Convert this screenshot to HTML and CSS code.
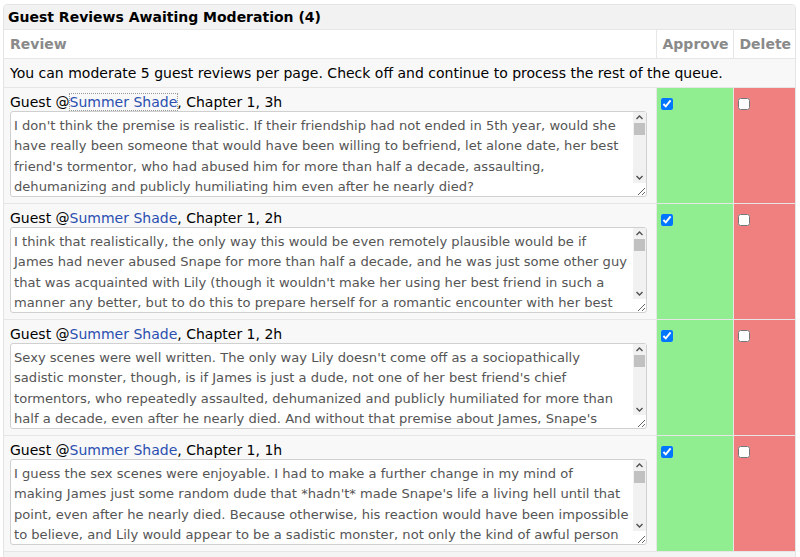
FILE: index.html
```html
<!DOCTYPE html>
<html>
<head>
<meta charset="utf-8">
<link rel="stylesheet" href="styles.css">
</head>
<body>
<div class="panel">
  <div class="title">Guest Reviews Awaiting Moderation (4)</div>
  <table class="grid">
    <colgroup><col class="c-review"><col class="c-approve"><col class="c-delete"></colgroup>
    <thead>
      <tr class="head">
        <th class="h-review">Review</th>
        <th class="h-act">Approve</th>
        <th class="h-act">Delete</th>
      </tr>
    </thead>
    <tbody>
      <tr class="info"><td colspan="3">You can moderate 5 guest reviews per page. Check off and continue to process the rest of the queue.</td></tr>
      <tr class="rev">
        <td class="body">
          <div class="meta">Guest @<a href="#" class="user focused">Summer Shade</a>, Chapter 1, 3h</div>
          <div class="tawrap">
            <textarea class="text" wrap="off">I don't think the premise is realistic. If their friendship had not ended in 5th year, would she
have really been someone that would have been willing to befriend, let alone date, her best
friend's tormentor, who had abused him for more than half a decade, assaulting,
dehumanizing and publicly humiliating him even after he nearly died?
It just doesn't fit with the person she was supposed to be, the girl who
stood up for him for years, and it makes it very hard to believe anything
that happens afterwards in this story.</textarea>
            <div class="sb" aria-hidden="true">
              <div class="sb-btn"><svg width="13" height="11" viewBox="0 0 13 11"><path d="M3.5 7 L6.5 4 L9.5 7" fill="none" stroke="#505050" stroke-width="1.4"/></svg></div>
              <div class="sb-thumb"></div>
              <div class="sb-track"></div>
              <div class="sb-btn"><svg width="13" height="11" viewBox="0 0 13 11"><path d="M3.5 4 L6.5 7 L9.5 4" fill="none" stroke="#505050" stroke-width="1.4"/></svg></div>
            </div>
          </div>
        </td>
        <td class="ok"><input type="checkbox" checked></td>
        <td class="del"><input type="checkbox"></td>
      </tr>
      <tr class="rev">
        <td class="body">
          <div class="meta">Guest @<a href="#" class="user">Summer Shade</a>, Chapter 1, 2h</div>
          <div class="tawrap">
            <textarea class="text" wrap="off">I think that realistically, the only way this would be even remotely plausible would be if
James had never abused Snape for more than half a decade, and he was just some other guy
that was acquainted with Lily (though it wouldn't make her using her best friend in such a
manner any better, but to do this to prepare herself for a romantic encounter with her best
friend's tormentor is something else entirely).</textarea>
            <div class="sb" aria-hidden="true">
              <div class="sb-btn"><svg width="13" height="11" viewBox="0 0 13 11"><path d="M3.5 7 L6.5 4 L9.5 7" fill="none" stroke="#505050" stroke-width="1.4"/></svg></div>
              <div class="sb-thumb"></div>
              <div class="sb-track"></div>
              <div class="sb-btn"><svg width="13" height="11" viewBox="0 0 13 11"><path d="M3.5 4 L6.5 7 L9.5 4" fill="none" stroke="#505050" stroke-width="1.4"/></svg></div>
            </div>
          </div>
        </td>
        <td class="ok"><input type="checkbox" checked></td>
        <td class="del"><input type="checkbox"></td>
      </tr>
      <tr class="rev">
        <td class="body">
          <div class="meta">Guest @<a href="#" class="user">Summer Shade</a>, Chapter 1, 2h</div>
          <div class="tawrap">
            <textarea class="text" wrap="off">Sexy scenes were well written. The only way Lily doesn't come off as a sociopathically
sadistic monster, though, is if James is just a dude, not one of her best friend's chief
tormentors, who repeatedly assaulted, dehumanized and publicly humiliated for more than
half a decade, even after he nearly died. And without that premise about James, Snape's
reaction would make a lot less sense.</textarea>
            <div class="sb" aria-hidden="true">
              <div class="sb-btn"><svg width="13" height="11" viewBox="0 0 13 11"><path d="M3.5 7 L6.5 4 L9.5 7" fill="none" stroke="#505050" stroke-width="1.4"/></svg></div>
              <div class="sb-thumb"></div>
              <div class="sb-track"></div>
              <div class="sb-btn"><svg width="13" height="11" viewBox="0 0 13 11"><path d="M3.5 4 L6.5 7 L9.5 4" fill="none" stroke="#505050" stroke-width="1.4"/></svg></div>
            </div>
          </div>
        </td>
        <td class="ok"><input type="checkbox" checked></td>
        <td class="del"><input type="checkbox"></td>
      </tr>
      <tr class="rev">
        <td class="body">
          <div class="meta">Guest @<a href="#" class="user">Summer Shade</a>, Chapter 1, 1h</div>
          <div class="tawrap">
            <textarea class="text" wrap="off">I guess the sex scenes were enjoyable. I had to make a further change in my mind of
making James just some random dude that *hadn't* made Snape's life a living hell until that
point, even after he nearly died. Because otherwise, his reaction would have been impossible
to believe, and Lily would appear to be a sadistic monster, not only the kind of awful person
who would use her best friend like that.</textarea>
            <div class="sb" aria-hidden="true">
              <div class="sb-btn"><svg width="13" height="11" viewBox="0 0 13 11"><path d="M3.5 7 L6.5 4 L9.5 7" fill="none" stroke="#505050" stroke-width="1.4"/></svg></div>
              <div class="sb-thumb"></div>
              <div class="sb-track"></div>
              <div class="sb-btn"><svg width="13" height="11" viewBox="0 0 13 11"><path d="M3.5 4 L6.5 7 L9.5 4" fill="none" stroke="#505050" stroke-width="1.4"/></svg></div>
            </div>
          </div>
        </td>
        <td class="ok"><input type="checkbox" checked></td>
        <td class="del"><input type="checkbox"></td>
      </tr>
      <tr class="foot"><td colspan="3">&nbsp;</td></tr>
    </tbody>
  </table>
</div>
</body>
</html>
```

FILE: styles.css
```css
html, body {
  margin: 0;
  padding: 0;
  background: #ffffff;
}
body {
  font-family: "DejaVu Sans", Verdana, sans-serif;
  font-size: 14px;
  color: #000;
}
.panel {
  width: 791px;
  margin: 4px 0 0 3px;
  border: 1px solid #e4e4e4;
  border-radius: 4px 4px 0 0;
  overflow: hidden;
}
.title {
  background: #f2f2f2;
  height: 24px;
  line-height: 24px;
  padding-left: 4px;
  font-weight: bold;
  font-size: 14px;
}
.grid {
  width: 100%;
  border-collapse: collapse;
  table-layout: fixed;
}
.c-review { width: auto; }
.c-approve { width: 77px; }
.c-delete { width: 62px; }
.grid td, .grid th {
  border: 1px solid #e6e6e6;
  padding: 0;
}
.grid tr > :first-child { border-left: none; }
.grid tr > :last-child { border-right: none; }
.head th {
  height: 28px;
  background: #fff;
  color: #8a8a8a;
  font-weight: bold;
  text-align: left;
  padding: 0 6px;
  white-space: nowrap;
}
.info td {
  height: 28px;
  background: #f8f8f8;
  padding: 0 6px;
}
.rev {
  height: 116px;
}
.rev td {
  vertical-align: top;
}
.rev .body {
  background: #f8f8f8;
  padding: 5px 8px 6px 6px;
}
.meta {
  height: 18px;
  line-height: 18px;
}
.user {
  color: #2a4fb0;
  text-decoration: none;
}
.user.focused {
  outline: 1px dotted #9a9a9a;
}
.tawrap {
  position: relative;
  width: 637px;
  height: 86px;
}
.text {
  display: block;
  box-sizing: border-box;
  width: 637px;
  height: 86px;
  margin: 0;
  padding: 4px 17px 2px 3px;
  border: 1px solid #d0d0d0;
  border-radius: 3px;
  background: #fff;
  color: #555;
  font-family: "DejaVu Sans", Verdana, sans-serif;
  font-size: 13.1px;
  line-height: 20.3px;
  white-space: pre;
  overflow: hidden;
}
.sb {
  position: absolute;
  top: 1px;
  right: 1px;
  width: 13px;
  height: 71px;
  background: #f1f1f1;
  display: flex;
  flex-direction: column;
}
.sb-btn {
  height: 11px;
  flex: none;
}
.sb-btn svg {
  display: block;
}
.sb-thumb {
  height: 12px;
  flex: none;
  margin: 0 1px;
  background: #c1c1c1;
}
.sb-track {
  flex: 1;
}
.rev .ok {
  background: #90ee90;
  padding: 9px 0 0 4px;
}
.rev .del {
  background: #f08080;
  padding: 9px 0 0 4px;
}
.rev input {
  margin: 0;
  width: 12px;
  height: 12px;
}
.foot td {
  height: 20px;
  background: #f4f4f4;
}
```
